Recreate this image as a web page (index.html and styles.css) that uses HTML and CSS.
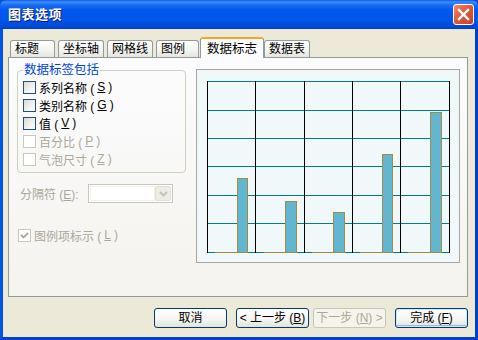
FILE: index.html
```html
<!DOCTYPE html>
<html lang="zh-CN">
<head>
<meta charset="utf-8">
<title>图表选项</title>
<link rel="stylesheet" href="styles.css">
</head>
<body>
<div class="window">
  <div class="titlebar">
    <span class="title">图表选项</span>
    <span class="close">
      <svg width="13" height="13" viewBox="0 0 13 13"><path d="M2 2 L11 11 M11 2 L2 11" stroke="#fff" stroke-width="2.4" stroke-linecap="square"/></svg>
    </span>
  </div>
  <div class="frame">
    <div class="tabs">
      <span class="tab">标题</span>
      <span class="tab">坐标轴</span>
      <span class="tab">网格线</span>
      <span class="tab t-narrow">图例</span>
      <span class="tab selected">数据标志</span>
      <span class="tab">数据表</span>
    </div>
    <div class="panel">
      <div class="left">
        <fieldset class="group">
          <legend>数据标签包括</legend>
          <label class="cb"><span class="box"></span>系列名称 (<u>S</u>)</label>
          <label class="cb"><span class="box"></span>类别名称 (<u>G</u>)</label>
          <label class="cb"><span class="box"></span>值 (<u>V</u>)</label>
          <label class="cb dis"><span class="box"></span>百分比 (<u>P</u>)</label>
          <label class="cb dis"><span class="box"></span>气泡尺寸 (<u>Z</u>)</label>
        </fieldset>
        <div class="sep-row">
          <span class="dis-text">分隔符 (<u>E</u>):</span>
          <span class="combo">
            <span class="combo-field"></span>
            <span class="combo-btn">
              <svg width="9" height="6" viewBox="0 0 9 6"><path d="M1 1 L4.5 4.5 L8 1" fill="none" stroke="#C3C3B8" stroke-width="2"/></svg>
            </span>
          </span>
        </div>
        <label class="cb dis legend-key"><span class="box">
          <svg width="11" height="11" viewBox="0 0 11 11"><path d="M2 5 L4.5 7.5 L9 3" fill="none" stroke="#ACA899" stroke-width="1.8"/></svg>
        </span>图例项标示 (<u>L</u>)</label>
      </div>
      <div class="chart">
        <svg width="262" height="192" viewBox="0 0 262 192">
          <g stroke="#008080" stroke-width="1">
            <line x1="10" y1="11.5" x2="253" y2="11.5"/>
            <line x1="10" y1="40.5" x2="253" y2="40.5"/>
            <line x1="10" y1="68.5" x2="253" y2="68.5"/>
            <line x1="10" y1="96.5" x2="253" y2="96.5"/>
            <line x1="10" y1="125.5" x2="253" y2="125.5"/>
            <line x1="10" y1="153.5" x2="253" y2="153.5"/>
            <line x1="10" y1="182.5" x2="253" y2="182.5"/>
          </g>
          <g stroke="#000" stroke-width="1">
            <line x1="10.5" y1="11" x2="10.5" y2="183"/>
            <line x1="58.5" y1="11" x2="58.5" y2="183"/>
            <line x1="107.5" y1="11" x2="107.5" y2="183"/>
            <line x1="155.5" y1="11" x2="155.5" y2="183"/>
            <line x1="203.5" y1="11" x2="203.5" y2="183"/>
            <line x1="252.5" y1="11" x2="252.5" y2="183"/>
          </g>
          <g stroke="#A08C44" stroke-width="1">
            <line x1="18" y1="182.5" x2="41" y2="182.5"/>
            <line x1="67" y1="182.5" x2="89" y2="182.5"/>
            <line x1="115" y1="182.5" x2="137" y2="182.5"/>
            <line x1="163" y1="182.5" x2="186" y2="182.5"/>
            <line x1="211" y1="182.5" x2="234" y2="182.5"/>
          </g>
          <g fill="#62B6CF" stroke="#A08C44" stroke-width="1">
            <rect x="40.5" y="108.5" width="10" height="74"/>
            <rect x="88.5" y="131.5" width="11" height="51"/>
            <rect x="136.5" y="142.5" width="11" height="40"/>
            <rect x="185.5" y="84.5" width="10" height="98"/>
            <rect x="233.5" y="42.5" width="11" height="140"/>
          </g>
        </svg>
      </div>
    </div>
    <div class="buttons">
      <span class="btn">取消</span>
      <span class="btn back">&lt; 上一步 (<u>B</u>)</span>
      <span class="btn disabled next">下一步 (<u>N</u>) &gt;</span>
      <span class="btn default">完成 (<u>F</u>)</span>
    </div>
  </div>
</div>
</body>
</html>
```

FILE: styles.css
```css
* { box-sizing: border-box; }
html, body { margin: 0; padding: 0; }
body {
  width: 478px;
  height: 340px;
  overflow: hidden;
  font-family: "Liberation Sans", "Noto Sans CJK SC", sans-serif;
  font-size: 12px;
  color: #000;
  background: #fff;
}
.window {
  width: 478px;
  height: 340px;
  display: flex;
  flex-direction: column;
  background: #0050DC;
}
.titlebar {
  height: 29px;
  flex: none;
  display: flex;
  align-items: center;
  justify-content: space-between;
  padding: 0 4px 0 8px;
  background: linear-gradient(#0A5DE8 0, #3D8FF8 2px, #1A6CF2 5px, #0058EE 10px, #0055E8 20px, #0049D8 27px, #003FC8 29px);
  border-radius: 6px 6px 0 0;
}
.title {
  color: #fff;
  font-weight: bold;
  font-size: 13px;
  line-height: 16px;
  text-shadow: 1px 1px 0 #0A1874;
  letter-spacing: 0.5px;
}
.close {
  width: 21px;
  height: 21px;
  border: 1px solid #fff;
  border-radius: 3px;
  background: linear-gradient(135deg, #F08A6C 0%, #E2583E 45%, #C8401F 100%);
  display: flex;
  align-items: center;
  justify-content: center;
}
.frame {
  flex: 1;
  display: flex;
  flex-direction: column;
  background: #ECE9D8;
  border-left: 3px solid #0055E5;
  border-right: 3px solid #0040CC;
  border-bottom: 3px solid #0040CC;
}
.tabs {
  display: flex;
  align-items: flex-start;
  height: 29px;
  padding: 8px 0 0 7px;
}
.tab {
  height: 17px;
  margin-top: 3px;
  min-width: 45px;
  margin-right: 3px;
  padding: 0 4px;
  line-height: 16px;
  border: 1px solid #919B9C;
  border-bottom: none;
  border-radius: 3px 3px 0 0;
  background: linear-gradient(#FFFFFF, #F3F3EF 60%, #E6E5DE);
  white-space: nowrap;
}
.tab.t-narrow { min-width: 43px; }
.tab.selected {
  position: relative;
  z-index: 1;
  height: 21px;
  margin-top: 0;
  margin-left: -2px;
  margin-right: 0;
  padding: 2px 6px 0 6px;
  border-top: 2px solid #F5A623;
  background: #FCFCFE;
  line-height: 17px;
  font-size: 12.5px;
}
.panel {
  margin: -1px 7px 0 5px;
  height: 240px;
  flex: none;
  border: 1px solid #919B9C;
  background: linear-gradient(#FCFCFE, #F4F3EE);
  display: flex;
  align-items: flex-start;
  padding: 4px 0 0 8px;
  gap: 10px;
}
.left {
  width: 169px;
  display: flex;
  flex-direction: column;
}
.group {
  margin: 0;
  padding: 0 4px 4px 5px;
  border: 1px solid #D0D0BF;
  border-radius: 4px;
}
.group legend {
  padding: 0 1px;
  color: #0046D5;
  line-height: 16px;
  font-size: 12.5px;
}
.cb {
  display: flex;
  align-items: center;
  height: 18px;
  gap: 3px;
  white-space: nowrap;
}
.cb u { text-decoration: underline; }
.box {
  width: 13px;
  height: 13px;
  flex: none;
  border: 1px solid #1C5180;
  background: linear-gradient(135deg, #DCDCD6, #F6F6F3 70%, #FFFFFF);
  display: flex;
  align-items: center;
  justify-content: center;
}
.cb.dis { color: #ACA899; }
.cb.dis .box {
  border-color: #CAC8BB;
  background: #FFFFFF;
}
.dis-text { color: #ACA899; white-space: nowrap; }
.sep-row {
  display: flex;
  align-items: center;
  margin-top: 11px;
  padding-left: 3px;
  height: 19px;
  gap: 3px;
}
.combo {
  width: 85px;
  height: 19px;
  border: 1px solid #C9C7BA;
  background: #fff;
  display: flex;
  padding: 1px;
  margin-left: auto;
  margin-right: 13px;
}
.combo-field { flex: 1; border: 1px solid #F2F1E6; }
.combo-btn {
  width: 16px;
  border-radius: 2px;
  background: #EEEDE5;
  border: 1px solid #E2E1D8;
  display: flex;
  align-items: center;
  justify-content: center;
}
.legend-key {
  margin-top: 23px;
  padding-left: 1px;
}
.chart {
  margin-top: 7px;
  width: 264px;
  height: 194px;
  border: 1px solid #A7A69C;
  background: #F0F8FA;
}
.chart svg { display: block; }
.buttons {
  display: flex;
  justify-content: flex-end;
  padding: 0 7px 0 0;
  margin-top: 11px;
}
.btn {
  width: 73px;
  height: 20px;
  border: 1px solid #003C74;
  border-radius: 3px;
  background: linear-gradient(#FFFFFF, #F4F4F0 60%, #E3E2DA);
  display: flex;
  align-items: center;
  justify-content: center;
  line-height: 16px;
  white-space: nowrap;
  margin-left: 9px;
}
.btn.next { margin-left: 4px; }
.btn.disabled {
  border-color: #C9C7BA;
  color: #ACA899;
  background: #F5F4EA;
}
.btn.default {
  box-shadow: inset 0 0 0 1px #CEE7FF, inset 0 -1px 0 1px #98B8EA;
}
```
